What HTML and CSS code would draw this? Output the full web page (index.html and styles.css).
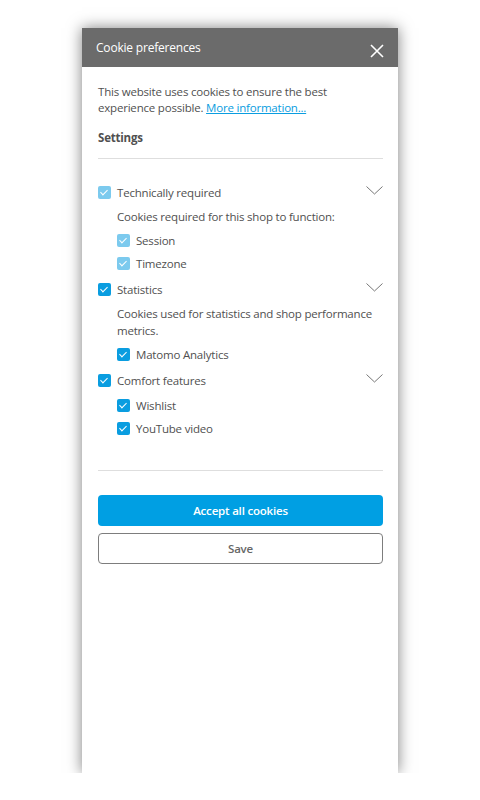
FILE: index.html
```html
<!DOCTYPE html>
<html>
	<head>
		<meta charset="UTF-8">
		<title>Cookie preferences</title>
		<link rel="stylesheet" href="styles.css">
	</head>
	<body>
		<div class="offcanvas">
			<div class="offcanvas-head">
				<span class="offcanvas-title">Cookie preferences</span>
				<svg class="close" width="14" height="14" viewBox="0 0 14 14"><path d="M1 1L13 13M13 1L1 13" stroke="#fff" stroke-width="1.6" fill="none"/></svg>
			</div>
			<div class="offcanvas-body">
				<p class="intro">This website uses cookies to ensure the best experience possible. <a href="###">More information...</a></p>
				<p class="settings">Settings</p>
				<div class="groups">
					<div class="group">
						<div class="row">
							<span class="check disabled"></span><span>Technically required</span>
							<svg class="chevron" width="17" height="9" viewBox="0 0 17 9"><path d="M0.5 0.5L8.5 8L16.5 0.5" stroke="#777" stroke-width="1" fill="none"/></svg>
						</div>
						<p class="desc">Cookies required for this shop to function:</p>
						<div class="subs">
							<div class="row"><span class="check disabled"></span><span>Session</span></div>
							<div class="row"><span class="check disabled"></span><span>Timezone</span></div>
						</div>
					</div>
					<div class="group">
						<div class="row">
							<span class="check"></span><span>Statistics</span>
							<svg class="chevron" width="17" height="9" viewBox="0 0 17 9"><path d="M0.5 0.5L8.5 8L16.5 0.5" stroke="#777" stroke-width="1" fill="none"/></svg>
						</div>
						<p class="desc">Cookies used for statistics and shop performance metrics.</p>
						<div class="subs">
							<div class="row"><span class="check"></span><span>Matomo Analytics</span></div>
						</div>
					</div>
					<div class="group">
						<div class="row">
							<span class="check"></span><span>Comfort features</span>
							<svg class="chevron" width="17" height="9" viewBox="0 0 17 9"><path d="M0.5 0.5L8.5 8L16.5 0.5" stroke="#777" stroke-width="1" fill="none"/></svg>
						</div>
						<div class="subs">
							<div class="row"><span class="check"></span><span>Wishlist</span></div>
							<div class="row"><span class="check"></span><span>YouTube video</span></div>
						</div>
					</div>
				</div>
				<div class="actions">
					<a class="btn btn-primary" href="###">Accept all cookies</a>
					<a class="btn btn-light" href="###">Save</a>
				</div>
			</div>
		</div>
	</body>
</html>
```

FILE: styles.css
```css
*{
	padding: 0;
	margin: 0;
	box-sizing: border-box;
}
body{
	font-family: "Open Sans", "Noto Sans", sans-serif;
	font-size: 11.5px;
	letter-spacing: -0.2px;
	color: #505050;
	background: #fff;
}
.offcanvas{
	width: 316px;
	height: 745px;
	margin: 28px 0 0 82px;
	background: #fff;
	box-shadow: 0 0 14px rgba(0,0,0,.5);
}
.offcanvas-head{
	height: 39px;
	background-color: #6b6b6b;
	color: #fff;
	display: flex;
	align-items: center;
	justify-content: space-between;
	padding: 0 14px 0 14px;
}
.offcanvas-title{
	font-size: 12px;
	margin-top: 0;
}
.close{
	margin-top: 6px;
}
.offcanvas-body{
	padding: 17px 15px 0 16px;
}
.intro{
	line-height: 16px;
}
.intro a{
	color: #0a9de0;
}
.settings{
	font-weight: 700;
	margin-top: 14px;
	line-height: 16px;
	padding-bottom: 12px;
	border-bottom: 1px solid #dedede;
}
.groups{
	padding: 22px 0 30px;
	border-bottom: 1px solid #dedede;
}
.group + .group{
	margin-top: 3px;
}
.row{
	height: 23px;
	display: flex;
	align-items: center;
	position: relative;
}
.check{
	width: 13px;
	height: 13px;
	border-radius: 2px;
	background: #0a9de0;
	margin-right: 6px;
	position: relative;
	flex-shrink: 0;
}
.check::after{
	content: "";
	position: absolute;
	left: 4px;
	top: 2px;
	width: 3px;
	height: 6px;
	border: solid #fff;
	border-width: 0 1.6px 1.6px 0;
	transform: rotate(45deg);
}
.check.disabled{
	background: #7ccaee;
}
.chevron{
	position: absolute;
	right: 0;
	top: 5px;
}
.desc{
	line-height: 17px;
	margin: 4px 0 2px 19px;
}
.subs{
	padding: 2px 0 0 19px;
}
.actions{
	padding-top: 24px;
	display: flex;
	flex-direction: column;
	gap: 7px;
}
.btn{
	display: block;
	height: 31px;
	line-height: 29px;
	text-align: center;
	border-radius: 4px;
	text-decoration: none;
	font-weight: 600;
	border: 1px solid transparent;
}
.btn-primary{
	background-color: #009fe3;
	color: #fff;
}
.btn-light{
	border-color: #7d7d7d;
	color: #666;
}
```
